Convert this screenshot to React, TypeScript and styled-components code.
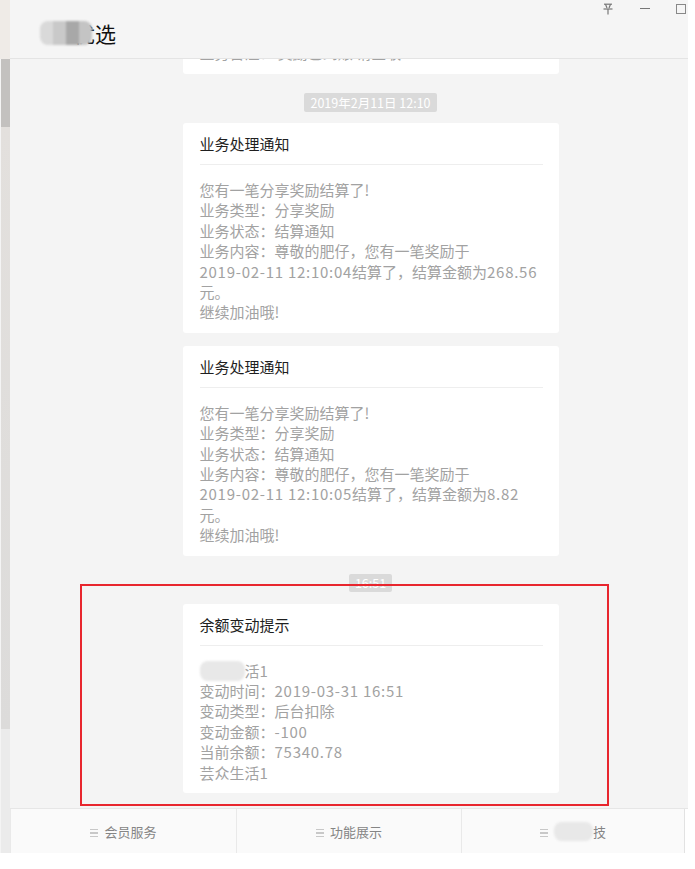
import React from "react";
import styled, { createGlobalStyle } from "styled-components";

const GlobalStyle = createGlobalStyle`
  html, body { margin: 0; padding: 0; background: #ffffff; }
  body { font-family: "Microsoft YaHei", "Noto Sans CJK SC", sans-serif; }
  * { box-sizing: border-box; }
`;

const Root = styled.div`
  position: relative;
  width: 688px;
  height: 853px;
  display: flex;
  background: #f4f4f4;
  overflow: hidden;
`;

const SideStrip = styled.div`
  width: 10px;
  flex-shrink: 0;
  display: flex;
  flex-direction: column;
`;

const StripTop = styled.div`
  height: 59px;
  background: #efebe7;
`;

const Thumb = styled.div`
  height: 68px;
  margin-left: 1px;
  background: #c3c1bf;
`;

const Track = styled.div`
  flex: 1;
  margin-left: 1px;
  background: linear-gradient(#e3e0dd, #dcdbda);
`;

const TrackEnd = styled.div`
  height: 124px;
  margin-left: 1px;
  background: #ebebeb;
`;

const Window = styled.div`
  flex: 1;
  min-width: 0;
  display: flex;
  flex-direction: column;
`;

const TitleBar = styled.div`
  height: 59px;
  flex-shrink: 0;
  display: flex;
  align-items: flex-start;
  justify-content: space-between;
  padding-left: 30px;
  background: #f5f5f5;
  border-bottom: 1px solid #e4e4e4;
`;

const Title = styled.div`
  margin-top: 21px;
  display: flex;
  align-items: center;
  height: 24px;
`;

const TitleMosaic = styled.span`
  position: relative;
  z-index: 1;
  display: inline-flex;
  width: 52px;
  height: 24px;
  border-radius: 8px;
  overflow: hidden;
  filter: blur(1px);
`;

const MosaicCell = styled.span<{ $c: string }>`
  flex: 1;
  background: ${(p) => p.$c};
`;

const TitleText = styled.span`
  margin-left: -18px;
  font-size: 21px;
  line-height: 24px;
  color: #111111;
`;

const Controls = styled.div`
  margin-top: 3px;
  display: flex;
  align-items: center;
  gap: 26px;
  padding-right: 2px;
  height: 11px;
`;

const Minus = styled.span`
  width: 10px;
  height: 1px;
  background: #777777;
`;

const Square = styled.span`
  width: 10px;
  height: 10px;
  border: 1.5px solid #888888;
`;

const ChatArea = styled.div`
  flex: 1;
  min-height: 0;
  overflow: hidden;
  display: flex;
  flex-direction: column;
  justify-content: flex-end;
  align-items: center;
  padding: 0 0 15px 43px;
  background: #f4f4f4;
`;

const Card = styled.div`
  flex-shrink: 0;
  width: 376px;
  background: #ffffff;
  border-radius: 3px;
  padding: 11px 16px 10px 17px;
  & + & {
    margin-top: 13px;
  }
`;

const CardTitle = styled.div`
  font-size: 15px;
  line-height: 20px;
  color: #1f1f1f;
`;

const Divider = styled.div`
  height: 1px;
  background: #eeeeee;
  margin: 10px 0 15px;
`;

const Line = styled.div`
  font-size: 15px;
  line-height: 20.4px;
  color: #a2a2a2;
  white-space: nowrap;
`;

const Num = styled.span`
  letter-spacing: 0.73px;
`;

const Mosaic = styled.span`
  display: inline-block;
  color: transparent;
  background: #e8e8e8;
  border-radius: 8px;
  filter: blur(1.2px);
`;

const Stamp = styled.div<{ $top: number; $bottom: number; $h: number }>`
  flex-shrink: 0;
  margin: ${(p) => p.$top}px 0 ${(p) => p.$bottom}px;
  height: ${(p) => p.$h}px;
  line-height: ${(p) => p.$h}px;
  padding: 0 6px;
  font-size: 12.5px;
  color: #ffffff;
  background: #dadada;
  border-radius: 2px;
`;

const MenuBar = styled.div`
  height: 45px;
  flex-shrink: 0;
  display: grid;
  grid-template-columns: 226px 225px 223px 1fr;
  background: #fafafa;
  border-top: 1px solid #e6e6e6;
`;

const MenuItem = styled.div`
  display: flex;
  align-items: center;
  justify-content: center;
  gap: 6px;
  font-size: 13px;
  color: #858585;
  border-left: 1px solid #e9e9e9;
`;

const MenuTail = styled.div`
  border-left: 1px solid #e2e2e2;
  background: #ffffff;
`;

const Burger = styled.span`
  margin-top: 4px;
  width: 8px;
  display: flex;
  flex-direction: column;
  gap: 2px;
  & > i {
    display: block;
    height: 1.5px;
    background: #c8c8c8;
  }
`;

const RedBox = styled.div`
  position: absolute;
  left: 80px;
  top: 584px;
  width: 529px;
  height: 222px;
  border: 2px solid #e8262e;
  pointer-events: none;
  z-index: 5;
`;

const PinIcon = () => (
  <svg width="12" height="12" viewBox="0 0 12 12" fill="none" stroke="#777" strokeWidth="1.2">
    <path d="M2 1.2h8" />
    <path d="M3.5 1.2L5 5M8.5 1.2L7 5" />
    <path d="M1.5 6h9" />
    <path d="M6 6v5.5" />
  </svg>
);

const BurgerIcon = () => (
  <Burger>
    <i />
    <i />
    <i />
  </Burger>
);

const fmt = (text: string): React.ReactNode[] =>
  text
    .split(/(-?\d[\d.:\- ]*\d|\d)/g)
    .filter((s) => s !== "")
    .map((s, i) => (/\d/.test(s) ? <Num key={i}>{s}</Num> : <React.Fragment key={i}>{s}</React.Fragment>));

type Msg = { title: string; lines: string[] };

const notice = (stamp: string, amount: string): Msg => ({
  title: "业务处理通知",
  lines: [
    "您有一笔分享奖励结算了!",
    "业务类型：分享奖励",
    "业务状态：结算通知",
    "业务内容：尊敬的肥仔，您有一笔奖励于",
    `2019-02-11 ${stamp}结算了，结算金额为${amount}`,
    "元。",
    "继续加油哦!",
  ],
});

const earlier: Msg = {
  title: "业务处理通知",
  lines: [...notice("12:10:03", "12.35").lines, "业务备注：    奖励已到账    请查收"],
};

const MessageCard: React.FC<{ msg: Msg }> = ({ msg }) => (
  <Card>
    <CardTitle>{msg.title}</CardTitle>
    <Divider />
    {msg.lines.map((l, i) => (
      <Line key={i}>{fmt(l)}</Line>
    ))}
  </Card>
);

const App: React.FC = () => (
  <>
    <GlobalStyle />
    <Root>
      <SideStrip>
        <StripTop />
        <Thumb />
        <Track />
        <TrackEnd />
      </SideStrip>
      <Window>
        <TitleBar>
          <Title>
            <TitleMosaic>
              <MosaicCell $c="#d9d9d9" />
              <MosaicCell $c="#c9c9c9" />
              <MosaicCell $c="#a8a8a8" />
              <MosaicCell $c="#c4c4c4" />
            </TitleMosaic>
            <TitleText>优选</TitleText>
          </Title>
          <Controls>
            <PinIcon />
            <Minus />
            <Square />
          </Controls>
        </TitleBar>
        <ChatArea>
          <MessageCard msg={earlier} />
          <Stamp $top={19} $bottom={11} $h={19}>
            2019年2月11日 12:10
          </Stamp>
          <MessageCard msg={notice("12:10:04", "268.56")} />
          <MessageCard msg={notice("12:10:05", "8.82")} />
          <Stamp $top={18} $bottom={12} $h={18}>
            16:51
          </Stamp>
          <Card>
            <CardTitle>余额变动提示</CardTitle>
            <Divider />
            <Line>
              <Mosaic>芸众生</Mosaic>活<Num>1</Num>
            </Line>
            {[
              "变动时间：2019-03-31 16:51",
              "变动类型：后台扣除",
              "变动金额：-100",
              "当前余额：75340.78",
              "芸众生活1",
            ].map((l, i) => (
              <Line key={i}>{fmt(l)}</Line>
            ))}
          </Card>
        </ChatArea>
        <MenuBar>
          <MenuItem>
            <BurgerIcon />
            会员服务
          </MenuItem>
          <MenuItem>
            <BurgerIcon />
            功能展示
          </MenuItem>
          <MenuItem>
            <BurgerIcon />
            <span>
              <Mosaic>芸众科</Mosaic>技
            </span>
          </MenuItem>
          <MenuTail />
        </MenuBar>
      </Window>
      <RedBox />
    </Root>
  </>
);

export default App;
